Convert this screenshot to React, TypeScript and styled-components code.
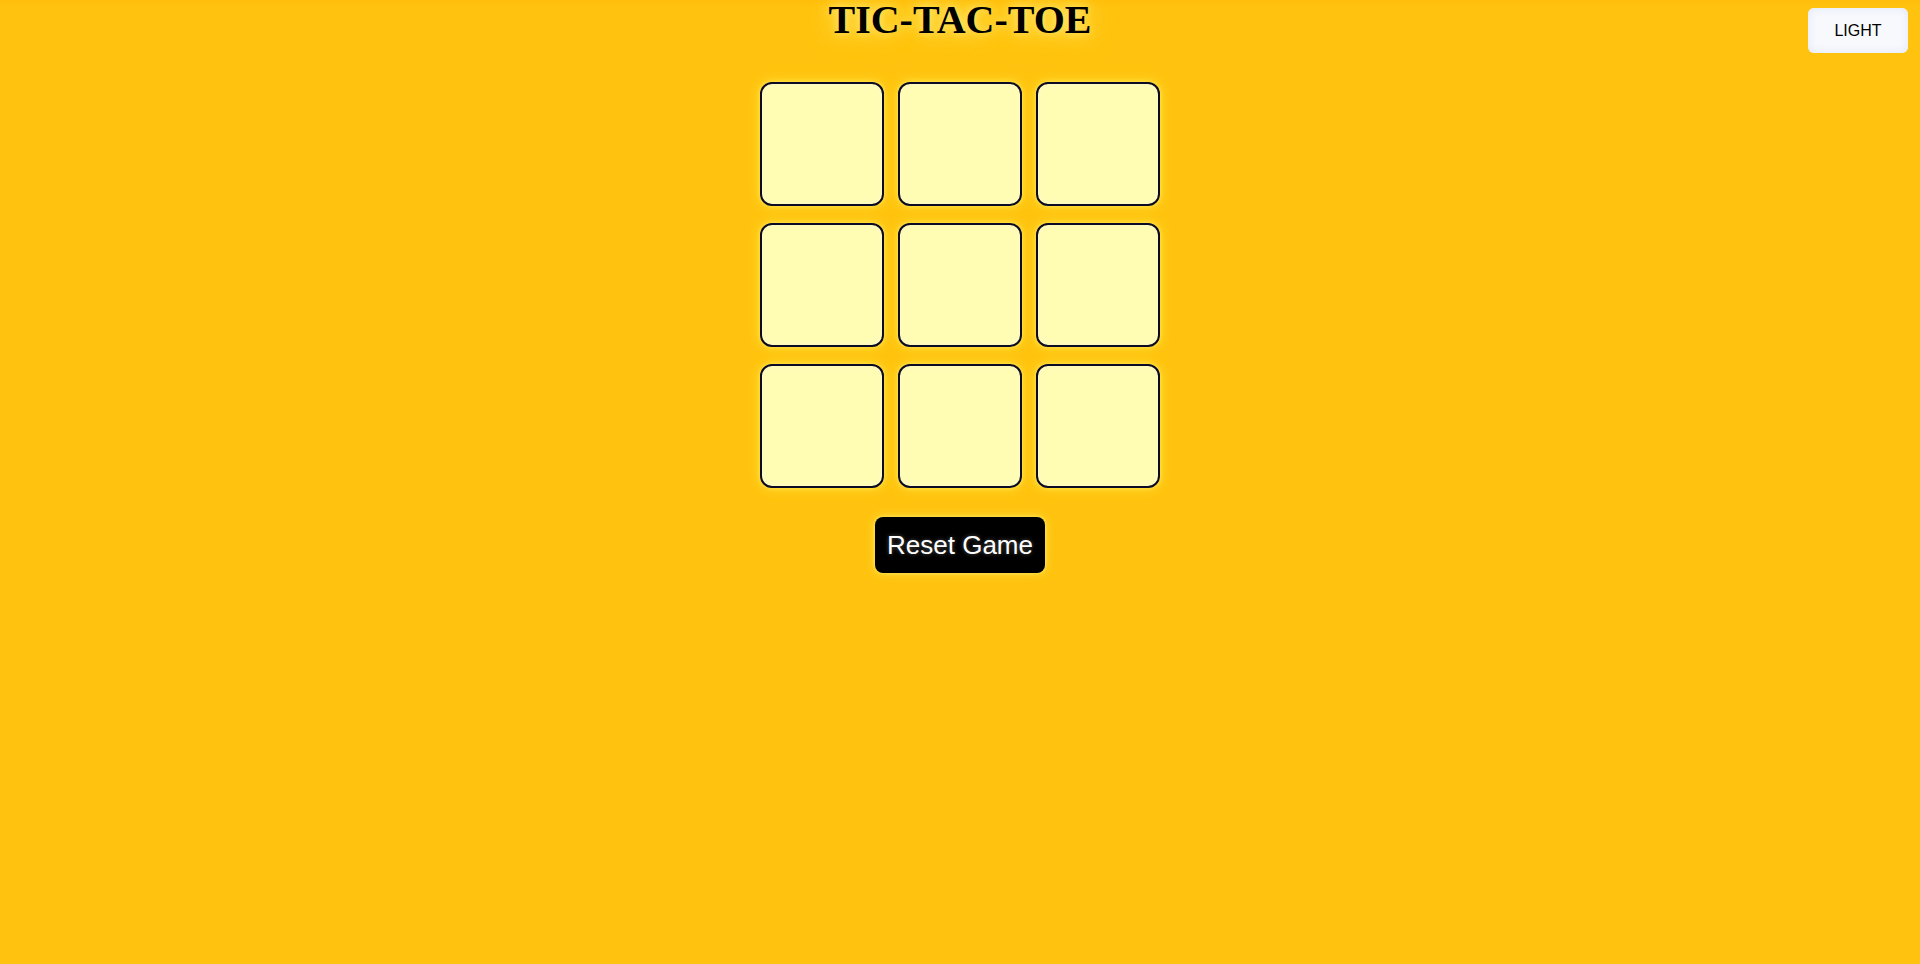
import React, { useState } from 'react';
import styled, { createGlobalStyle } from 'styled-components';

const GlobalStyle = createGlobalStyle`
  html, body {
    margin: 0;
    padding: 0;
    background: #ffc20e;
  }
  body { min-height: 964px; }
`;

const Page = styled.div`
  position: relative;
  min-height: 964px;
  display: flex;
  flex-direction: column;
  align-items: center;
  background: linear-gradient(#ffbd0a 0px, #ffc30f 8px, #ffc30f 100%);
`;

const Title = styled.h1`
  margin: 0;
  font-family: "Liberation Serif", "Times New Roman", serif;
  font-size: 40px;
  line-height: 40px;
  font-weight: 700;
  color: #000;
  text-shadow: 0 0 8px #ffec80, 0 0 18px #ffe14d, 0 0 28px #ffe14d;
`;

const Board = styled.div`
  margin-top: 42px;
  display: grid;
  grid-template-columns: repeat(3, 124px);
  grid-auto-rows: 124px;
  column-gap: 14px;
  row-gap: 17px;
`;

const Cell = styled.button`
  box-sizing: border-box;
  width: 124px;
  height: 124px;
  padding: 0;
  border: 2px solid #0b0b26;
  border-radius: 12px;
  background: #fffdb3;
  box-shadow: 0 0 12px #ffe033, 0 0 4px #ffe866, inset 0 0 6px #fff8c9;
  font-family: "Liberation Sans", Arial, sans-serif;
  font-size: 64px;
  font-weight: 700;
  color: #000;
  cursor: pointer;
`;

const ResetButton = styled.button`
  margin-top: 29px;
  box-sizing: border-box;
  width: 170px;
  height: 56px;
  padding: 0;
  border: none;
  border-radius: 8px;
  background: #000;
  color: #fff;
  font-family: "Liberation Sans", Arial, sans-serif;
  font-size: 26px;
  box-shadow: 0 0 10px #ffe54d, 0 0 3px #fff17a;
  text-shadow: 0 0 4px #555;
  cursor: pointer;
`;

const ModeButton = styled.button`
  position: absolute;
  top: 8px;
  right: 12px;
  box-sizing: border-box;
  width: 100px;
  height: 45px;
  border: none;
  border-radius: 6px;
  background: #f8f9fd;
  box-shadow: inset 0 0 10px #dfe6f5;
  color: #000;
  font-family: "Liberation Sans", Arial, sans-serif;
  font-size: 16px;
  cursor: pointer;
`;

export default function App() {
  const [cells, setCells] = useState<string[]>(Array(9).fill(''));
  const [turn, setTurn] = useState('X');
  const [light, setLight] = useState(false);

  const play = (i: number) => {
    if (cells[i]) return;
    const next = [...cells];
    next[i] = turn;
    setCells(next);
    setTurn(turn === 'X' ? 'O' : 'X');
  };

  const reset = () => {
    setCells(Array(9).fill(''));
    setTurn('X');
  };

  return (
    <>
      <GlobalStyle />
      <Page>
        <ModeButton onClick={() => setLight(!light)}>{light ? 'DARK' : 'LIGHT'}</ModeButton>
        <Title>TIC-TAC-TOE</Title>
        <Board>
          {cells.map((c, i) => (
            <Cell key={i} onClick={() => play(i)}>{c}</Cell>
          ))}
        </Board>
        <ResetButton onClick={reset}>Reset Game</ResetButton>
      </Page>
    </>
  );
}
